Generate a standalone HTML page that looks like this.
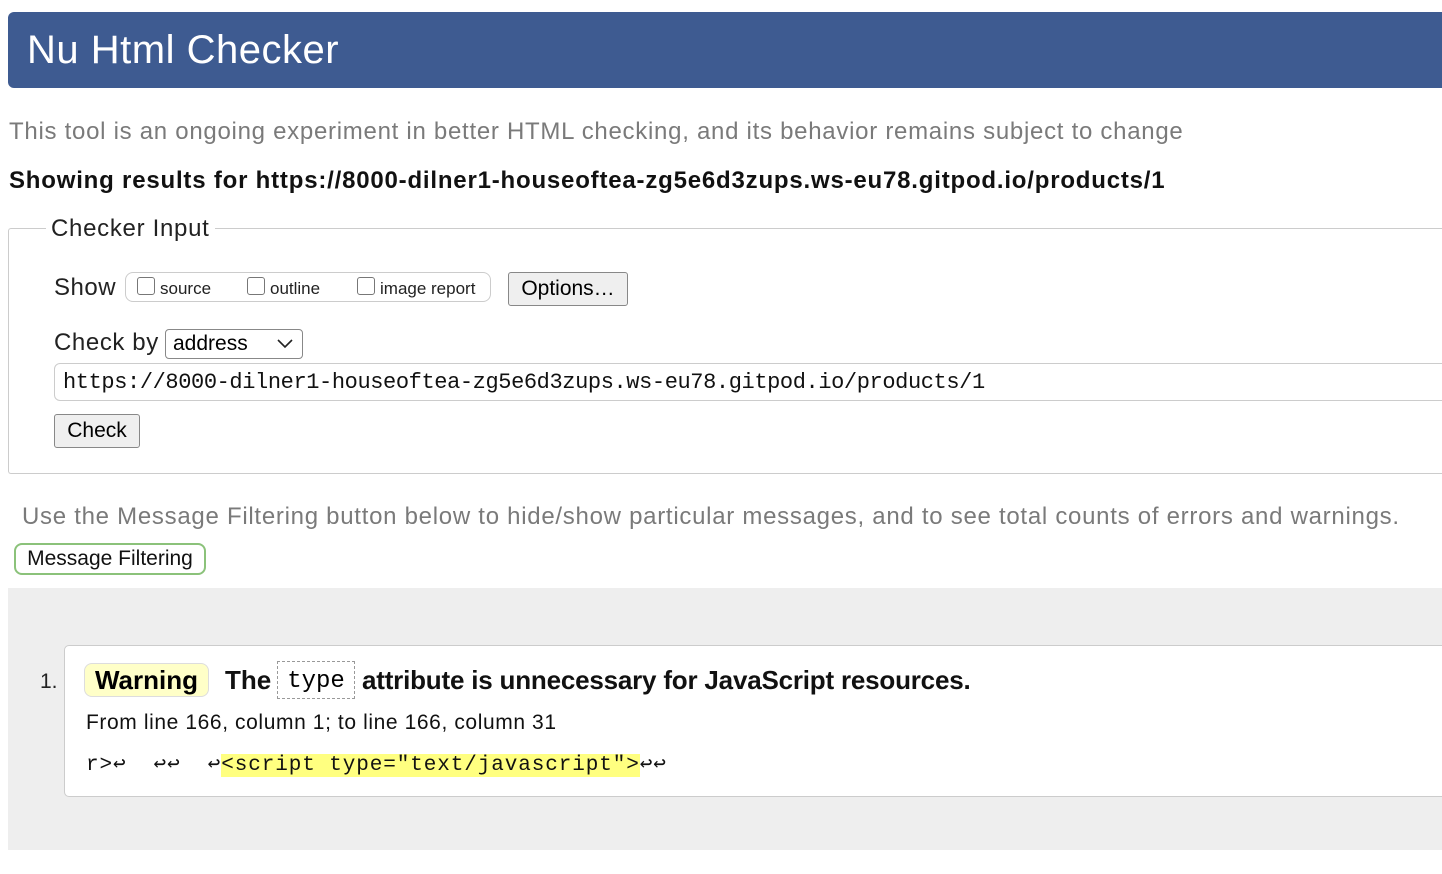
<!DOCTYPE html>
<html><head><meta charset="utf-8"><style>
body{margin:0;width:1442px;height:874px;overflow:hidden;background:#fff;font-family:"Liberation Sans",Arial,sans-serif;position:relative}
.a{position:absolute;white-space:nowrap}
.mono{font-family:"Liberation Mono","DejaVu Sans Mono",monospace}
.btn{position:absolute;background:#efefef;border:1px solid #888;border-radius:3px;font-size:21px;line-height:32px;padding:0 10px;box-sizing:border-box}
.cb{display:inline-block;width:16px;height:16px;border:1px solid #777;border-radius:3px;vertical-align:-1px;margin-right:5px;background:#fff}
</style></head><body>
<div class="a" style="left:8px;top:12px;width:1440px;height:76px;background:#3e5b91;border-radius:6px 0 0 6px"></div>
<div class="a" style="left:27px;top:26px;font-size:40px;color:#fff;line-height:48px;letter-spacing:0.5px">Nu Html Checker</div>
<div class="a" style="left:9px;top:117px;font-size:24px;color:#7a7a7a;line-height:30px;letter-spacing:0.72px">This tool is an ongoing experiment in better HTML checking, and its behavior remains subject to change</div>
<div class="a" style="left:9px;top:166px;font-size:24px;font-weight:bold;color:#111;line-height:30px;letter-spacing:0.8px">Showing results for https://8000-dilner1-houseoftea-zg5e6d3zups.ws-eu78.gitpod.io/products/1</div>
<div class="a" style="left:8px;top:228px;width:1440px;height:246px;border:1px solid #ccc;border-right:none;box-sizing:border-box;border-radius:3px 0 0 3px"></div>
<div class="a" style="left:46px;top:214px;font-size:24px;background:#fff;padding:0 5px;line-height:30px;color:#222;letter-spacing:0.7px">Checker Input</div>
<div class="a" style="left:54px;top:273px;font-size:24px;line-height:30px;color:#222;letter-spacing:0.5px">Show</div>
<div class="a" style="left:125px;top:272px;width:366px;height:30px;border:1px solid #ccc;border-radius:8px;box-sizing:border-box"></div>
<div class="a" style="left:137px;top:277px;font-size:17px;line-height:24px;color:#222"><span class="cb"></span>source</div>
<div class="a" style="left:247px;top:277px;font-size:17px;line-height:24px;color:#222"><span class="cb"></span>outline</div>
<div class="a" style="left:357px;top:277px;font-size:17px;line-height:24px;color:#222"><span class="cb"></span>image report</div>
<div class="btn" style="left:508px;top:272px;width:120px;height:34px;text-align:center;padding:0">Options…</div>
<div class="a" style="left:54px;top:328px;font-size:24px;line-height:30px;color:#222;letter-spacing:0.6px">Check by</div>
<div class="a" style="left:165px;top:329px;width:138px;height:30px;border:1px solid #888;border-radius:4px;box-sizing:border-box;font-size:21px;line-height:28px;padding-left:7px">address
<svg style="position:absolute;right:9px;top:9px" width="16" height="10" viewBox="0 0 16 10"><path d="M1 1l7 7 7-7" fill="none" stroke="#222" stroke-width="1.6"/></svg></div>
<div class="a mono" style="left:54px;top:363px;width:1400px;height:38px;border:1px solid #ccc;border-radius:6px;box-sizing:border-box;font-size:22px;line-height:38px;padding-left:8px;color:#111;letter-spacing:-0.4px">https://8000-dilner1-houseoftea-zg5e6d3zups.ws-eu78.gitpod.io/products/1</div>
<div class="btn" style="left:54px;top:414px;width:86px;height:34px;text-align:center;padding:0">Check</div>
<div class="a" style="left:22px;top:502px;font-size:24px;color:#7a7a7a;line-height:30px;letter-spacing:0.72px">Use the Message Filtering button below to hide/show particular messages, and to see total counts of errors and warnings.</div>
<div class="a" style="left:14px;top:543px;width:192px;height:32px;border:2px solid #8bc27a;border-radius:8px;box-sizing:border-box;font-size:21px;line-height:28px;text-align:center;color:#111">Message Filtering</div>
<div class="a" style="left:8px;top:588px;width:1440px;height:262px;background:#eee"></div>
<div class="a" style="left:64px;top:645px;width:1390px;height:152px;background:#fff;border:1px solid #ccc;border-radius:5px;box-sizing:border-box"></div>
<div class="a" style="left:40px;top:670px;font-size:21px;line-height:24px;color:#222">1.</div>
<div class="a" style="left:84px;top:663px;width:125px;height:34px;background:#ffffc8;border:1px solid #ddd;border-radius:8px;box-sizing:border-box;font-size:26px;font-weight:bold;line-height:32px;text-align:center">Warning</div>
<div class="a" style="left:225px;top:665px;font-size:26px;font-weight:bold;line-height:30px;color:#111">The</div>
<div class="a mono" style="left:277px;top:661px;width:78px;height:38px;border:1px dashed #999;box-sizing:border-box;font-size:24px;line-height:40px;text-align:center">type</div>
<div class="a" style="left:362px;top:665px;font-size:26px;font-weight:bold;line-height:30px;color:#111;letter-spacing:-0.2px">attribute is unnecessary for JavaScript resources.</div>
<div class="a" style="left:86px;top:710px;font-size:21px;line-height:26px;color:#111;letter-spacing:0.6px">From line 166, column 1; to line 166, column 31</div>
<div class="a mono" style="left:86px;top:753px;font-size:21px;line-height:26px;color:#111;letter-spacing:0.9px">r>↩&nbsp;&nbsp;↩↩&nbsp;&nbsp;↩<span style="background:#ffff80">&lt;script type="text/javascript"&gt;</span>↩↩</div>
</body></html>
